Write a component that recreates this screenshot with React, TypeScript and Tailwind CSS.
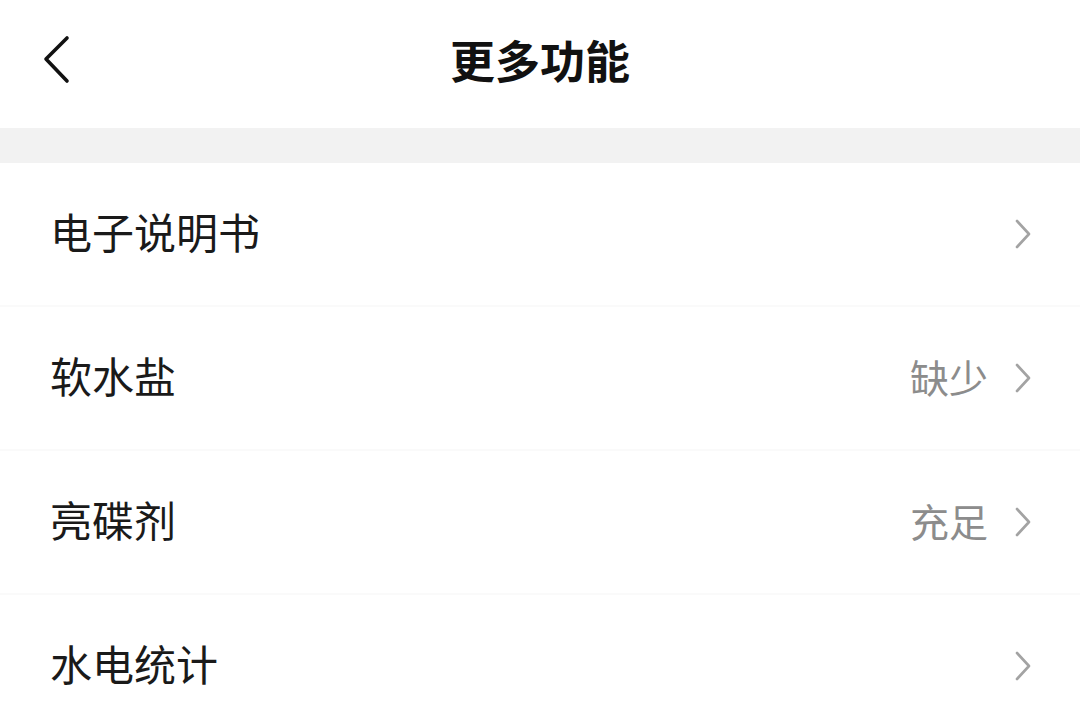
import React from 'react';

const font = { fontFamily: '"Noto Sans CJK SC", "Noto Sans", sans-serif' };

const items: { label: string; value?: string }[] = [
  { label: '电子说明书' },
  { label: '软水盐', value: '缺少' },
  { label: '亮碟剂', value: '充足' },
  { label: '水电统计' },
];

function Chevron() {
  return (
    <svg width="18" height="32" viewBox="0 0 18 32" fill="none">
      <path d="M3 3 L15 16 L3 29" stroke="#a3a3a3" strokeWidth="2.6" strokeLinecap="round" strokeLinejoin="round" />
    </svg>
  );
}

export default function App() {
  return (
    <div className="w-[1080px] h-[727px] overflow-hidden bg-white" style={font}>
      <div className="relative flex h-[128px] items-center justify-center bg-white">
        <button className="absolute left-[40px] top-[35px]">
          <svg width="32" height="50" viewBox="0 0 32 50" fill="none">
            <path d="M27 3 L6 24 L27 46" stroke="#111" strokeWidth="3.6" strokeLinecap="round" strokeLinejoin="round" />
          </svg>
        </button>
        <h1 className="text-[45px] font-bold leading-none text-[#111] -mt-[10px]">更多功能</h1>
      </div>
      <div className="h-[35px] bg-[#f2f2f2]" />
      {items.map((it) => (
        <div
          key={it.label}
          className="flex h-[144px] items-center justify-between border-b-2 border-[#fafafa] pl-[50px] pr-[48px]"
        >
          <span className="text-[42px] leading-none text-[#1a1a1a] -mt-[6px]">{it.label}</span>
          <div className="flex items-center gap-[26px]">
            {it.value && <span className="text-[39px] leading-none text-[#8c8c8c] -mt-[4px]">{it.value}</span>}
            <Chevron />
          </div>
        </div>
      ))}
    </div>
  );
}
